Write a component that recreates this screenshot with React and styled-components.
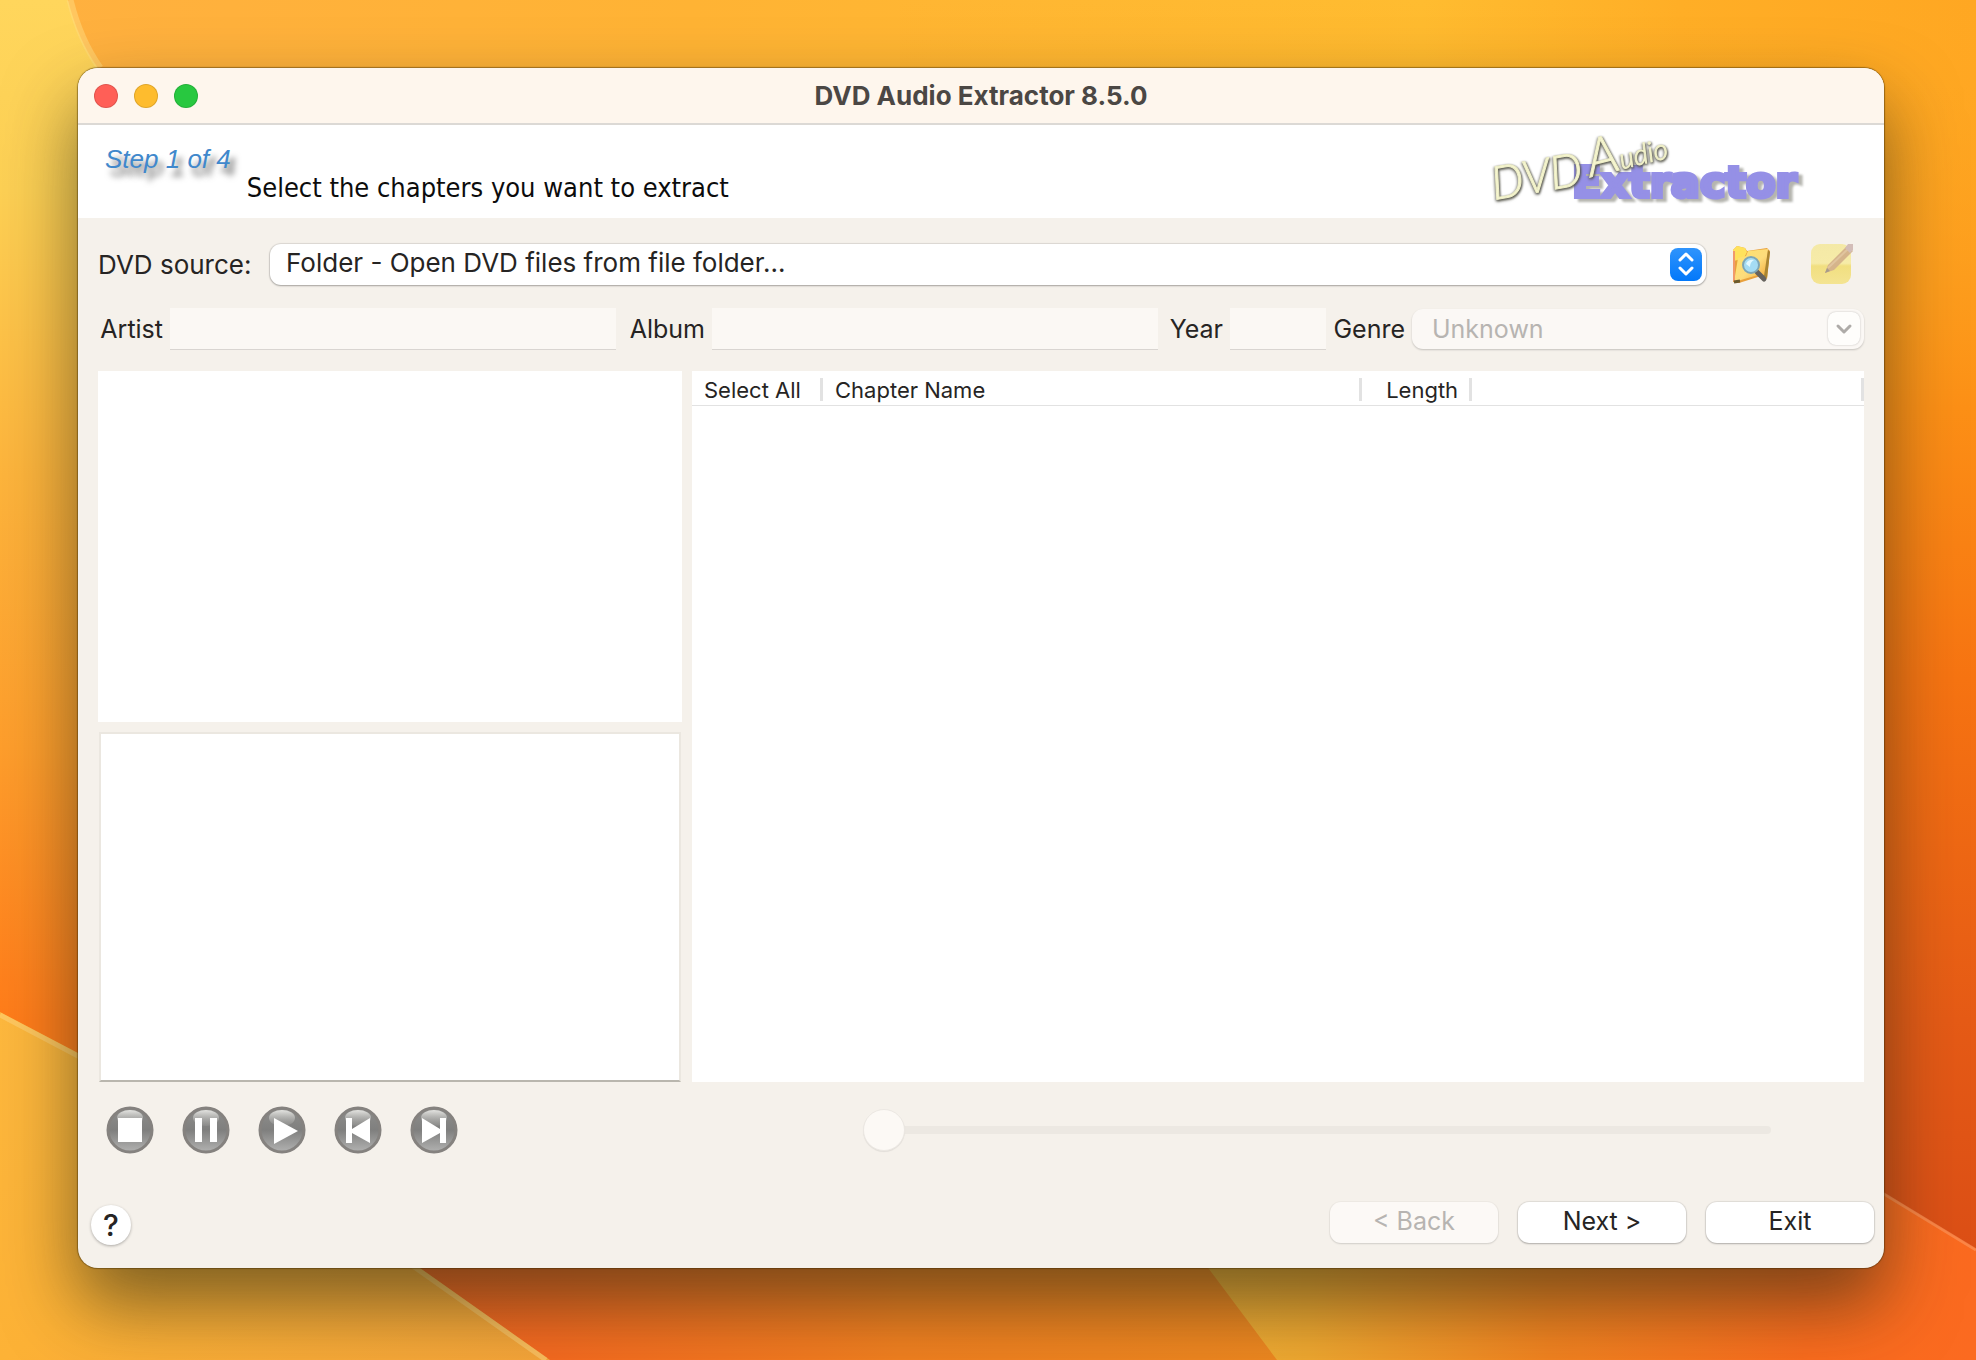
import React, { useState } from "react";
import styled, { createGlobalStyle, css } from "styled-components";

const GlobalStyle = createGlobalStyle`
    * {
        box-sizing: border-box;
    }

    body {
        margin: 0;
        font-family: Inter, "Liberation Sans", sans-serif;
        font-size: 25px;
        color: #262423;
    }

    button, input, select {
        font: inherit;
        color: inherit;
    }
`

const Desktop = styled.main`
    position: relative;
    z-index: 0;
    display: flex;
    min-height: 100vh;
    padding: 68px 92px 92px 78px;
    overflow: hidden;
`

const WallpaperSvg = styled.svg`
    position: absolute;
    inset: 0;
    z-index: -1;
    width: 100%;
    height: 100%;
`

const Window = styled.section`
    flex: 1;
    display: flex;
    flex-direction: column;
    min-width: 0;
    border-radius: 20px;
    background: #f5f1eb;
    box-shadow: 0 0 1px 1px rgba(60, 40, 0, 0.45), 0 36px 72px rgba(40, 40, 20, 0.6);
`

const TitleBar = styled.header`
    display: grid;
    grid-template-columns: 1fr auto 1fr;
    align-items: center;
    height: 57px;
    padding: 0 16px;
    border-bottom: 2px solid #dcd9d5;
    border-radius: 20px 20px 0 0;
    background: #fef6ed;
`

const Lights = styled.div`
    display: flex;
    gap: 16px;
`

const Light = styled.button`
    width: 24px;
    height: 24px;
    padding: 0;
    border: 1px solid rgba(0, 0, 0, 0.12);
    border-radius: 50%;
    background: ${(props) => props.$color};
`

const Title = styled.h1`
    margin: 0;
    font-size: 26px;
    line-height: 32px;
    font-weight: 700;
    color: #4b4744;
`

const Banner = styled.div`
    display: flex;
    align-items: flex-start;
    height: 93px;
    padding: 0 76px 0 27px;
    background: #ffffff;
`

const Step = styled.span`
    padding-top: 18px;
    font-family: "Liberation Sans", Arial, sans-serif;
    font-size: 26px;
    line-height: 32px;
    font-style: italic;
    color: #4088cc;
    text-shadow: 5px 8px 6px rgba(0, 0, 0, 0.6);
`

const StepText = styled.h2`
    margin: 0;
    padding: 47px 0 0 16px;
    font-family: "DejaVu Sans Condensed", "DejaVu Sans", sans-serif;
    font-size: 27px;
    line-height: 32px;
    font-weight: 400;
    color: #0c0c0c;
`

const LogoSvg = styled.svg`
    width: 316px;
    height: 92px;
    margin-left: auto;
    overflow: visible;
`

const LogoBlock = styled.g`
    font-family: "DejaVu Sans", sans-serif;
    font-size: 43px;
    font-weight: 700;
    fill: #9590e6;
    stroke: #9590e6;
    stroke-width: 4px;
    filter: drop-shadow(4px 3px 1px rgba(120, 120, 110, 0.55));
`

const LogoScript = styled.g`
    font-family: "Liberation Sans Narrow", Lato, sans-serif;
    font-size: 52px;
    font-style: italic;
    font-weight: 300;
    fill: #f6f6d0;
    stroke: #f0f0c8;
    stroke-width: 1px;
    filter: drop-shadow(1px 1px 1px #55554a) drop-shadow(-1px 1px 1px rgba(85, 85, 74, 0.6));
`

const Body = styled.div`
    flex: 1;
    display: flex;
    flex-direction: column;
    padding: 25px 20px 0;
`

const SourceRow = styled.div`
    display: grid;
    grid-template-columns: 172px 1fr auto auto;
    align-items: center;
    height: 42px;
    padding-right: 10px;
    font-size: 26px;
`

const SelectBox = styled.div`
    position: relative;
    display: flex;
`

const SourceSelect = styled.select`
    appearance: none;
    flex: 1;
    height: 41px;
    padding: 0 60px 3px 16px;
    border: 0;
    border-radius: 11px;
    background: #ffffff;
    box-shadow: 0 0 1px 1px rgba(0, 0, 0, 0.1), 0 1px 2px rgba(0, 0, 0, 0.25);
    opacity: 1;
`

const GenreSelect = styled(SourceSelect)`
    height: 40px;
    padding-left: 20px;
    padding-bottom: 0;
    background: #fbf8f5;
    color: #b7b4b1;
    box-shadow: 0 1px 2px rgba(0, 0, 0, 0.2);
`

const Arrow = styled.span`
    position: absolute;
    top: ${(props) => (props.$blue ? "4px" : "3px")};
    right: 4px;
    display: flex;
    align-items: center;
    justify-content: center;
    width: 32px;
    height: 33px;
    border-radius: 8px;
    background: #fefdfb;
    box-shadow: 0 0 2px rgba(0, 0, 0, 0.25);
    color: #aeaba8;
    pointer-events: none;

    ${(props) => props.$blue && css`
        background: linear-gradient(#2f94fc, #0278fa);
        box-shadow: none;
        color: #ffffff;
    `}
`

const ToolButton = styled.button`
    display: flex;
    width: 44px;
    height: 42px;
    margin-left: ${(props) => props.$gap};
    padding: 0;
    border: 0;
    background: none;
`

const TagRow = styled.div`
    display: grid;
    grid-template-columns: 72px 446fr 96px 446fr 72px 96px 86px 452fr;
    align-items: center;
    height: 42px;
    margin: 23px 0 21px;
`

const TagLabel = styled.label`
    padding-right: 7px;
    text-align: right;
`

const TagInput = styled.input`
    width: 100%;
    min-width: 0;
    height: 42px;
    padding: 0 8px;
    border: 0;
    border-bottom: 1px solid #d9d5d1;
    background: #fbf8f4;
`

const Panels = styled.div`
    flex: 1;
    display: grid;
    grid-template-columns: 584fr 1172fr;
    gap: 10px;
`

const LeftPanels = styled.div`
    display: grid;
    grid-template-rows: 1fr 1fr;
    gap: 10px;
`

const TitleList = styled.div`
    background: #ffffff;
`

const InfoBox = styled.div`
    margin: 0 1px;
    border: 2px solid #ebe7e0;
    border-bottom-color: #b9b6ae;
    background: #ffffff;
`

const ChapterPanel = styled.div`
    background: #ffffff;
`

const ChapterTable = styled.table`
    width: 100%;
    border-collapse: collapse;
    table-layout: fixed;
    border-bottom: 1px solid #e2e2e2;
`

const HeadCell = styled.th`
    width: ${(props) => props.$width};
    height: 34px;
    padding: 5px 14px 0 12px;
    background: linear-gradient(#e2e2e2, #e2e2e2) right 7px / 3px 23px no-repeat;
    font-size: 22px;
    line-height: 28px;
    font-weight: 400;
    text-align: ${(props) => props.$align || "left"};
    white-space: nowrap;
`

const Player = styled.div`
    display: grid;
    grid-template-columns: 765px 1fr;
    align-items: center;
    height: 96px;
    padding-right: 93px;
`

const Transport = styled.div`
    display: flex;
    gap: 28px;
    padding-left: 8px;
`

const TransportButton = styled.button`
    display: flex;
    width: 48px;
    height: 48px;
    padding: 0;
    border: 0;
    background: none;
`

const Seek = styled.input`
    appearance: none;
    width: 100%;
    height: 42px;
    margin: 0;
    background: none;

    &::-webkit-slider-runnable-track {
        height: 8px;
        border-radius: 4px;
        background: #ece8e2;
    }

    &::-webkit-slider-thumb {
        appearance: none;
        width: 42px;
        height: 42px;
        margin-top: -17px;
        border: 1px solid #ece8e3;
        border-radius: 50%;
        background: #fcf9f5;
        box-shadow: 0 1px 1px rgba(0, 0, 0, 0.08);
    }
`

const Footer = styled.footer`
    display: flex;
    align-items: center;
    gap: 20px;
    height: 90px;
    padding: 0 10px 2px 13px;
`

const Help = styled.button`
    width: 40px;
    height: 40px;
    margin: 6px auto 0 0;
    padding: 0;
    border: 0;
    border-radius: 50%;
    background: #ffffff;
    box-shadow: 0 1px 3px rgba(0, 0, 0, 0.3);
    font-size: 30px;
    line-height: 40px;
    font-weight: 500;
`

const PushButton = styled.button`
    width: 168px;
    height: 41px;
    padding: 0 0 2px;
    border: 0;
    border-radius: 11px;
    background: #ffffff;
    box-shadow: 0 0 1px 1px rgba(0, 0, 0, 0.08), 0 1px 2px rgba(0, 0, 0, 0.22);

    &:disabled {
        background: #fcf9f6;
        color: #b7b4b1;
        box-shadow: 0 0 1px 1px rgba(0, 0, 0, 0.03), 0 1px 2px rgba(0, 0, 0, 0.12);
    }
`

const Wallpaper = () => (
    <WallpaperSvg viewBox="0 0 1976 1360" preserveAspectRatio="none" aria-hidden="true">
        <defs>
            <linearGradient id="top" x1="0" x2="1" y1="0" y2="0">
                <stop offset="0" stopColor="#ffb040" />
                <stop offset="0.35" stopColor="#ffb334" />
                <stop offset="0.72" stopColor="#ffbc30" />
                <stop offset="0.85" stopColor="#ffae26" />
                <stop offset="1" stopColor="#ffa722" />
            </linearGradient>
            <linearGradient id="right" x1="0" x2="0" y1="0" y2="1">
                <stop offset="0" stopColor="#ffad25" stopOpacity="0" />
                <stop offset="0.3" stopColor="#fd9016" />
                <stop offset="0.5" stopColor="#f77412" />
                <stop offset="0.75" stopColor="#e65b16" />
                <stop offset="0.92" stopColor="#dc4f16" />
            </linearGradient>
            <linearGradient id="left" x1="0" x2="0" y1="0" y2="1">
                <stop offset="0" stopColor="#ffd65c" />
                <stop offset="0.14" stopColor="#fdd054" />
                <stop offset="0.35" stopColor="#fdb43c" />
                <stop offset="0.55" stopColor="#fe9e2c" />
                <stop offset="0.75" stopColor="#ff7c1a" />
                <stop offset="1" stopColor="#ff7c1a" />
            </linearGradient>
            <linearGradient id="corner" x1="0" x2="1" y1="0" y2="1">
                <stop offset="0" stopColor="#fdb83e" />
                <stop offset="0.5" stopColor="#fdb236" />
                <stop offset="1" stopColor="#f6a53a" />
            </linearGradient>
            <linearGradient id="middle" x1="0" x2="1" y1="0" y2="0">
                <stop offset="0" stopColor="#f4621f" />
                <stop offset="0.25" stopColor="#f66a20" />
                <stop offset="0.6" stopColor="#f28020" />
                <stop offset="1" stopColor="#ee8820" />
            </linearGradient>
            <linearGradient id="gold" x1="0" x2="1" y1="0" y2="0">
                <stop offset="0" stopColor="#efb23a" />
                <stop offset="0.22" stopColor="#f0a830" />
                <stop offset="0.5" stopColor="#f38320" />
                <stop offset="0.8" stopColor="#fb6c1e" />
                <stop offset="1" stopColor="#fb6a20" />
            </linearGradient>
        </defs>
        <rect width="1976" height="1360" fill="url(#top)" />
        <rect x="900" width="1076" height="1360" fill="url(#right)" />
        <path d="M0 0H68Q78 40 98 68L300 560V1360H0Z" fill="url(#left)" />
        <path d="M70 0Q80 40 100 68" fill="none" stroke="#ffdc80" strokeWidth="7" opacity="0.5" />
        <path d="M300 1150H1300V1360H300Z" fill="url(#middle)" />
        <path d="M1120 1150L1800 1145L1884 1193L1976 1249V1360H1277Z" fill="url(#gold)" />
        <path d="M1800 1146L1884 1194L1976 1250" fill="none" stroke="#ff9a60" strokeWidth="3" opacity="0.6" />
        <path d="M0 1012L78 1053Q250 1140 420 1268L550 1360H0Z" fill="url(#corner)" />
        <path d="M0 1015L78 1056Q250 1144 417 1269L546 1360" fill="none" stroke="#ffd680" strokeWidth="5" opacity="0.5" />
    </WallpaperSvg>
);

const Logo = () => (
    <LogoSvg viewBox="0 0 316 92">
        <LogoBlock>
            <text x="80" y="72">Extractor</text>
        </LogoBlock>
        <LogoScript>
            <text x="2" y="75" fontSize="46" transform="rotate(-10 2 75)">DVD</text>
            <text x="99" y="52" transform="rotate(-14 99 52)">A<tspan fontSize="28">udio</tspan></text>
        </LogoScript>
    </LogoSvg>
);

const FolderIcon = () => (
    <svg width="42" height="42" viewBox="0 0 42 42">
        <defs>
            <linearGradient id="folder" x1="0" x2="1" y1="0" y2="1">
                <stop offset="0" stopColor="#ffe36a" />
                <stop offset="0.55" stopColor="#fddc7c" />
                <stop offset="1" stopColor="#f2a02c" />
            </linearGradient>
        </defs>
        <path d="M3 7L7 3L15 5L17 8L37 5L40 8L37 36L31 33L9 40L3 39Z" fill="#e9a13c" />
        <path d="M3 7L7 3L15 5L17 9L14 15L4 18Z" fill="#ffe25c" />
        <path d="M8 15L16 13L18 8L38 6L35 34L28 32L4 39Z" fill="url(#folder)" />
        <path d="M38 7L40 9L37 35L34 33Z" fill="#a98532" />
        <path d="M4 8V38" stroke="#f19a6a" strokeWidth="2" />
        <path d="M4 39L10 38" stroke="#6b5a2c" strokeWidth="3" />
        <path d="M27 29L34 36" stroke="#66635e" strokeWidth="5" strokeLinecap="round" />
        <circle cx="21" cy="22" r="8" fill="#a5dcf4" stroke="#7fa6b4" strokeWidth="2" />
        <path d="M16 21Q18 16 24 17Q20 19 20 24Z" fill="#e2f8ff" />
    </svg>
);

const NoteIcon = () => (
    <svg width="44" height="42" viewBox="0 0 44 42">
        <defs>
            <linearGradient id="note" x1="0" x2="0" y1="0" y2="1">
                <stop offset="0" stopColor="#f4e9a6" />
                <stop offset="0.48" stopColor="#f6eba8" />
                <stop offset="0.55" stopColor="#f1df80" />
                <stop offset="1" stopColor="#f4e492" />
            </linearGradient>
        </defs>
        <rect x="1" y="1" width="40" height="40" rx="9" fill="url(#note)" />
        <path d="M15 30L18 22L37 3L43 8L24 27Z" fill="#d5b48b" />
        <path d="M18 25L39 5" stroke="#e0c49e" strokeWidth="2" />
        <path d="M15 30L17 25L20 28Z" fill="#a79c8a" />
        <path d="M35 5L38 1H43V7L40 10Z" fill="#d3bdb8" />
    </svg>
);

const glyphs = {
    stop: <rect x="12" y="12" width="24" height="24" />,
    pause: <path d="M13 12H20V36H13ZM28 12H35V36H28Z" />,
    play: <path d="M16 12V38L40 25Z" />,
    previous: <path d="M12 12H18V23L36 12V37L18 27V37H12Z" />,
    next: <path d="M12 12L30 23V12H36V37H30V27L12 37Z" />,
};

const TransportIcon = ({ name }) => (
    <svg width="48" height="48" viewBox="0 0 48 48">
        <defs>
            <linearGradient id={name + "Base"} x1="0" x2="0" y1="0" y2="1">
                <stop offset="0" stopColor="#8e8e8c" />
                <stop offset="0.5" stopColor="#7f7f7e" />
                <stop offset="1" stopColor="#b2b2b1" />
            </linearGradient>
            <linearGradient id={name + "Shine"} x1="0" x2="0" y1="0" y2="1">
                <stop offset="0" stopColor="#e4e4e1" />
                <stop offset="1" stopColor="#a2a2a0" stopOpacity="0.3" />
            </linearGradient>
        </defs>
        <circle cx="24" cy="24" r="22" fill={`url(#${name}Base)`} stroke="#85827f" strokeWidth="3" />
        <ellipse cx="24" cy="12" rx="13" ry="8" fill={`url(#${name}Shine)`} />
        <g fill="#ffffff">{glyphs[name]}</g>
    </svg>
);

const transport = [
    { name: "stop", label: "Stop" },
    { name: "pause", label: "Pause" },
    { name: "play", label: "Play" },
    { name: "previous", label: "Previous chapter" },
    { name: "next", label: "Next chapter" },
];

const App = () => {
    const [source, setSource] = useState("folder");

    return (
        <Desktop>
            <GlobalStyle />
            <Wallpaper />
            <Window>
                <TitleBar>
                    <Lights>
                        <Light $color="#ff5f57" aria-label="Close" />
                        <Light $color="#febc2e" aria-label="Minimize" />
                        <Light $color="#28c840" aria-label="Zoom" />
                    </Lights>
                    <Title>DVD Audio Extractor 8.5.0</Title>
                </TitleBar>
                <Banner>
                    <Step>Step 1 of 4</Step>
                    <StepText>Select the chapters you want to extract</StepText>
                    <Logo />
                </Banner>
                <Body>
                    <SourceRow>
                        <label htmlFor="source">DVD source:</label>
                        <SelectBox>
                            <SourceSelect id="source" value={source} onChange={(e) => setSource(e.target.value)}>
                                <option value="folder">Folder - Open DVD files from file folder...</option>
                            </SourceSelect>
                            <Arrow $blue>
                                <svg width="18" height="26" viewBox="0 0 18 26" fill="none" stroke="currentColor" strokeWidth="3" strokeLinecap="round" strokeLinejoin="round">
                                    <path d="M3 9L9 3L15 9M3 17L9 23L15 17" />
                                </svg>
                            </Arrow>
                        </SelectBox>
                        <ToolButton $gap="24px" aria-label="Browse folder"><FolderIcon /></ToolButton>
                        <ToolButton $gap="36px" aria-label="Edit tags" disabled><NoteIcon /></ToolButton>
                    </SourceRow>
                    <TagRow>
                        <TagLabel htmlFor="artist">Artist</TagLabel>
                        <TagInput id="artist" disabled />
                        <TagLabel htmlFor="album">Album</TagLabel>
                        <TagInput id="album" disabled />
                        <TagLabel htmlFor="year">Year</TagLabel>
                        <TagInput id="year" disabled />
                        <TagLabel htmlFor="genre">Genre</TagLabel>
                        <SelectBox>
                            <GenreSelect id="genre" disabled>
                                <option>Unknown</option>
                            </GenreSelect>
                            <Arrow>
                                <svg width="18" height="12" viewBox="0 0 18 12" fill="none" stroke="currentColor" strokeWidth="3" strokeLinecap="round" strokeLinejoin="round">
                                    <path d="M3 3L9 9L15 3" />
                                </svg>
                            </Arrow>
                        </SelectBox>
                    </TagRow>
                    <Panels>
                        <LeftPanels>
                            <TitleList />
                            <InfoBox />
                        </LeftPanels>
                        <ChapterPanel>
                            <ChapterTable>
                                <thead>
                                    <tr>
                                        <HeadCell $width="131px" scope="col">Select All</HeadCell>
                                        <HeadCell $width="46%" scope="col">Chapter Name</HeadCell>
                                        <HeadCell $width="110px" $align="right" scope="col">Length</HeadCell>
                                        <HeadCell as="td" />
                                    </tr>
                                </thead>
                            </ChapterTable>
                        </ChapterPanel>
                    </Panels>
                    <Player>
                        <Transport>
                            {transport.map((item) => (
                                <TransportButton key={item.name} aria-label={item.label}>
                                    <TransportIcon name={item.name} />
                                </TransportButton>
                            ))}
                        </Transport>
                        <Seek type="range" min="0" max="100" defaultValue="0" aria-label="Position" disabled />
                    </Player>
                </Body>
                <Footer>
                    <Help aria-label="Help">?</Help>
                    <PushButton disabled>&lt; Back</PushButton>
                    <PushButton>Next &gt;</PushButton>
                    <PushButton>Exit</PushButton>
                </Footer>
            </Window>
        </Desktop>
    );
};

export default App;
